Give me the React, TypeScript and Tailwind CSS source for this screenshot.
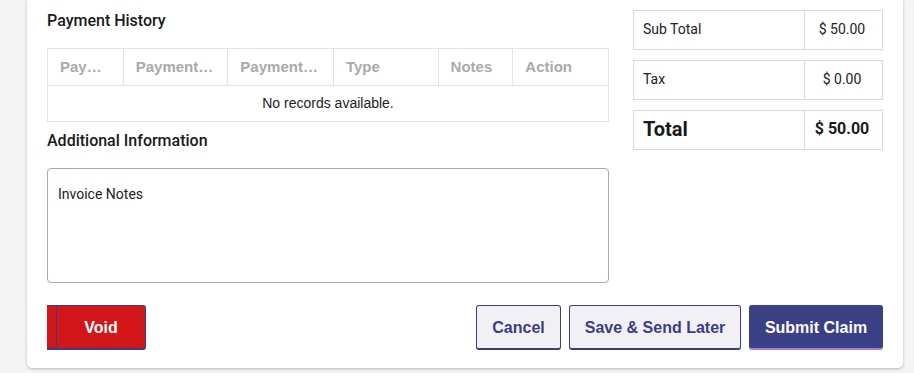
import React from "react";

const columns = [
  { label: "Payment Date", shown: "Pay…", w: "w-[75px]" },
  { label: "Payment Method", shown: "Payment…", w: "w-[105px]" },
  { label: "Payment Amount", shown: "Payment…", w: "w-[106px]" },
  { label: "Type", shown: "Type", w: "w-[105px]" },
  { label: "Notes", shown: "Notes", w: "w-[75px]" },
  { label: "Action", shown: "Action", w: "w-[96px]" },
];

const SummaryRow = ({ label, value, big }: { label: string; value: string; big?: boolean }) => (
  <div className="flex h-[40px] border border-[#d9d9d9] bg-white">
    <div
      className={
        big
          ? "flex-1 flex items-center pl-[9px] pb-[2px] text-[20px] font-bold text-[#1a1a1a]"
          : "flex-1 flex items-center pl-[9px] pb-[2px] text-[14px] text-[#222]"
      }
    >
      {label}
    </div>
    <div
      className={
        big
          ? "w-[78px] border-l border-[#d9d9d9] flex items-center justify-center pr-[3px] pb-[2px] text-[16px] font-bold text-[#1a1a1a]"
          : "w-[78px] border-l border-[#d9d9d9] flex items-center justify-center pr-[3px] pb-[2px] text-[14px] text-[#222]"
      }
    >
      {value}
    </div>
  </div>
);

const App = () => {
  return (
    <div className="w-full h-[373px] bg-[#f4f4f4] overflow-hidden">
      <div className="ml-[27px] w-[876px] bg-white rounded-b-[5px] shadow-[0_1px_3px_rgba(0,0,0,0.25)] px-[20px] pt-[10px] pb-[18px]">
        <div className="flex gap-[24px]">
          {/* left side */}
          <div className="w-[562px]">
            <h3 className="mt-[1px] h-[20px] leading-[20px] text-[16px] font-medium text-[#1a1a1a] font-['Roboto',sans-serif]">
              Payment History
            </h3>
            <div className="mt-[17px] border border-[#e3e3e3] font-['Liberation_Sans',Arial,sans-serif]">
              <div className="flex h-[37px] border-b border-[#e3e3e3]">
                {columns.map((c, i) => (
                  <div
                    key={c.label}
                    title={c.label}
                    className={`${c.w} ${i > 0 ? "border-l border-[#e3e3e3]" : ""} flex items-center pl-[12px] text-[15px] font-bold text-[#aaaaaa] whitespace-nowrap`}
                  >
                    {c.shown}
                  </div>
                ))}
              </div>
              <div className="h-[35px] flex items-center justify-center text-[14px] text-[#222]">
                No records available.
              </div>
            </div>
            <h3 className="mt-[9px] h-[20px] leading-[20px] text-[16px] font-medium text-[#1a1a1a] font-['Roboto',sans-serif]">
              Additional Information
            </h3>
            <div className="mt-[17px] h-[115px] border border-[#a9a9a9] rounded-[4px] px-[10px] pt-[16px] leading-[18px] text-[14px] text-[#222] font-['Roboto',sans-serif]">
              Invoice Notes
            </div>
          </div>

          {/* right side */}
          <div className="w-[250px] flex flex-col gap-[10px] font-['Roboto',sans-serif]">
            <SummaryRow label="Sub Total" value="$ 50.00" />
            <SummaryRow label="Tax" value="$ 0.00" />
            <SummaryRow label="Total" value="$ 50.00" big />
          </div>
        </div>

        {/* buttons */}
        <div className="mt-[22px] flex items-center font-['Liberation_Sans',Arial,sans-serif] text-[16px] font-bold">
          <div className="relative w-[99px] h-[45px]">
            <div className="absolute left-0 top-0 w-[90px] h-[45px] bg-[#d3161a] border-t border-b-2 border-[#3a3d84]"></div>
            <button className="absolute left-[9px] top-0 w-[90px] h-[45px] pt-[2px] bg-[#d3161a] text-white rounded-[3px] border border-b-2 border-[#3a3d84]">
              Void
            </button>
          </div>
          <div className="ml-auto flex gap-[8px]">
            <button className="w-[85px] h-[45px] pt-[2px] bg-[#f1f1f5] text-[#3a3d84] rounded-[3px] border border-b-2 border-[#3a3d84]">
              Cancel
            </button>
            <button className="w-[172px] h-[45px] pt-[2px] bg-[#f1f1f5] text-[#3a3d84] rounded-[3px] border border-b-2 border-[#3a3d84]">
              Save &amp; Send Later
            </button>
            <button className="w-[134px] h-[45px] pt-[2px] bg-[#3b3f86] text-white rounded-[3px] border-b-2 border-[#9b85d8]">
              Submit Claim
            </button>
          </div>
        </div>
      </div>
    </div>
  );
};

export default App;
